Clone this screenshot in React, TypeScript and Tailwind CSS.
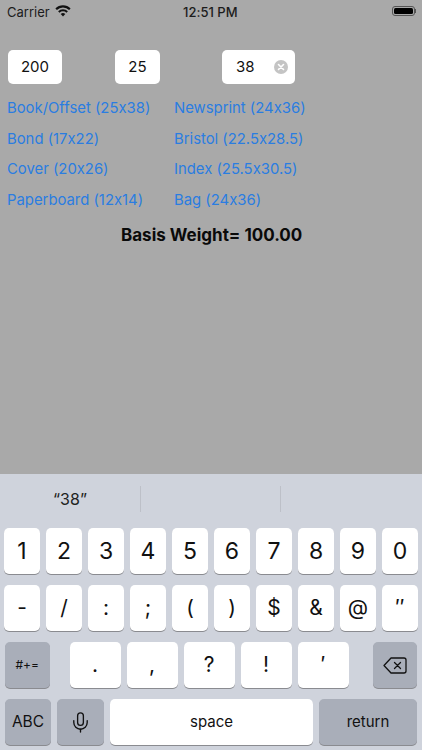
import { Mic } from "lucide-react";

const font = { fontFamily: "Inter, Roboto, sans-serif", fontFeatureSettings: "'calt' 0" };

const links = [
  ["Book/Offset (25x38)", "Newsprint (24x36)"],
  ["Bond (17x22)", "Bristol (22.5x28.5)"],
  ["Cover (20x26)", "Index (25.5x30.5)"],
  ["Paperboard (12x14)", "Bag (24x36)"],
];

const row1 = ["1", "2", "3", "4", "5", "6", "7", "8", "9", "0"];
const row2 = ["-", "/", ":", ";", "(", ")", "$", "&", "@", "″"];
const row3 = [".", ",", "?", "!", "′"];

function Key({ label, className }: { label: React.ReactNode; className: string }) {
  return (
    <div className={"flex h-[46px] items-center justify-center rounded-[5px] shadow-[0_1px_0_#8a8b90] text-[#111] " + className}>
      {label}
    </div>
  );
}

export default function App() {
  return (
    <div className="flex h-[750px] w-[422px] flex-col overflow-hidden bg-[#a9a9a9]" style={font}>
      <div className="flex h-[50px] shrink-0 items-start justify-between px-[7px] pt-[3px] text-[13px] text-[#1c1c1c]">
        <div className="flex items-center gap-[5px]">
          <span>Carrier</span>
          <svg width="16" height="12" viewBox="0 0 16 12" fill="#111" className="mb-[3px]">
            <path d="M8 11.6 5.7 9.1a3.3 3.3 0 0 1 4.6 0Z" />
            <path d="M4.5 7.8 3.1 6.3a7 7 0 0 1 9.8 0l-1.4 1.5a5 5 0 0 0-7 0Z" />
            <path d="M1.9 5 .4 3.5a10.8 10.8 0 0 1 15.2 0L14.1 5a8.7 8.7 0 0 0-12.2 0Z" />
          </svg>
        </div>
        <span className="ml-[-42px] font-medium">12:51 PM</span>
        <div className="mr-[-1px] mt-[3px] flex items-center">
          <div className="h-[10px] w-[23px] rounded-[3px] border border-[#555] p-[1px]">
            <div className="h-full w-full rounded-[1.5px] bg-black" />
          </div>
          <div className="h-[4px] w-[1px] bg-[#555]" />
        </div>
      </div>

      <div className="flex h-[34px] shrink-0 items-center pl-[8px] text-[15px] text-[#111]">
        <div className="flex h-[34px] w-[54px] items-center justify-center rounded-[5px] bg-white">200</div>
        <div className="ml-[53px] flex h-[34px] w-[45px] items-center justify-center rounded-[5px] bg-white">25</div>
        <div className="ml-[62px] flex h-[34px] w-[73px] items-center justify-between rounded-[5px] bg-white pl-[14px] pr-[7px]">
          <span>38</span>
          <span className="flex h-[14px] w-[14px] items-center justify-center rounded-full bg-[#c4c4c4]">
            <svg width="8" height="8" viewBox="0 0 8 8" stroke="white" strokeWidth="1.6" strokeLinecap="round">
              <path d="M1.5 1.5 6.5 6.5M6.5 1.5 1.5 6.5" />
            </svg>
          </span>
        </div>
      </div>

      <div className="mt-[14px] flex flex-col gap-[10.7px] pl-[7px] text-[14.85px] leading-[20px] text-[#2a7de1]">
        {links.map(([a, b]) => (
          <div key={a} className="flex">
            <span className="w-[167px]">{a}</span>
            <span>{b}</span>
          </div>
        ))}
      </div>

      <div className="mt-[13px] pl-[121px] text-[17px] font-bold leading-[24px] text-[#0a0a0a]">Basis Weight= 100.00</div>

      <div className="mt-auto flex h-[276px] shrink-0 flex-col bg-[#cfd3dc]">
        <div className="flex h-[54px] shrink-0 items-center pb-[4px]">
          <div className="flex h-[26px] w-[141px] items-center justify-center border-r border-[#bdc0c8] text-[16px] text-[#222]">“38”</div>
          <div className="h-[26px] w-[140px] border-r border-[#bdc0c8]" />
        </div>
        <div className="flex flex-col gap-[11px]">
          <div className="grid grid-cols-10 gap-[6px] px-[4px]">
            {row1.map((k) => (
              <Key key={k} label={k} className="bg-white text-[23px] font-normal" />
            ))}
          </div>
          <div className="grid grid-cols-10 gap-[6px] px-[4px]">
            {row2.map((k) => (
              <Key key={k} label={k} className="bg-white text-[21px] font-normal" />
            ))}
          </div>
          <div className="flex px-[5px]">
            <Key label="#+=" className="w-[45px] bg-[#a9aeb9] text-[12px]" />
            <div className="ml-[20px] flex gap-[6px]">
              {row3.map((k) => (
                <Key key={k} label={k} className="w-[51px] bg-white text-[21px] font-normal" />
              ))}
            </div>
            <Key
              label={
                <svg width="24" height="17" viewBox="0 0 24 17" fill="none" stroke="#111" strokeWidth="1.3" strokeLinejoin="round" strokeLinecap="round">
                  <path d="M8 1h13a2 2 0 0 1 2 2v11a2 2 0 0 1-2 2H8L1 8.5Z" />
                  <path d="M11.5 5.5l6 6M17.5 5.5l-6 6" />
                </svg>
              }
              className="ml-[24px] w-[45px] bg-[#a9aeb9]"
            />
          </div>
          <div className="flex gap-[6px] px-[5px]">
            <Key label="ABC" className="w-[46px] bg-[#a9aeb9] text-[15.5px]" />
            <Key label={<Mic size={23} strokeWidth={1.4} />} className="w-[47px] bg-[#a9aeb9]" />
            <Key label="space" className="w-[203px] bg-white text-[15px]" />
            <Key label="return" className="w-[98px] bg-[#a9aeb9] text-[15px]" />
          </div>
        </div>
      </div>
    </div>
  );
}
